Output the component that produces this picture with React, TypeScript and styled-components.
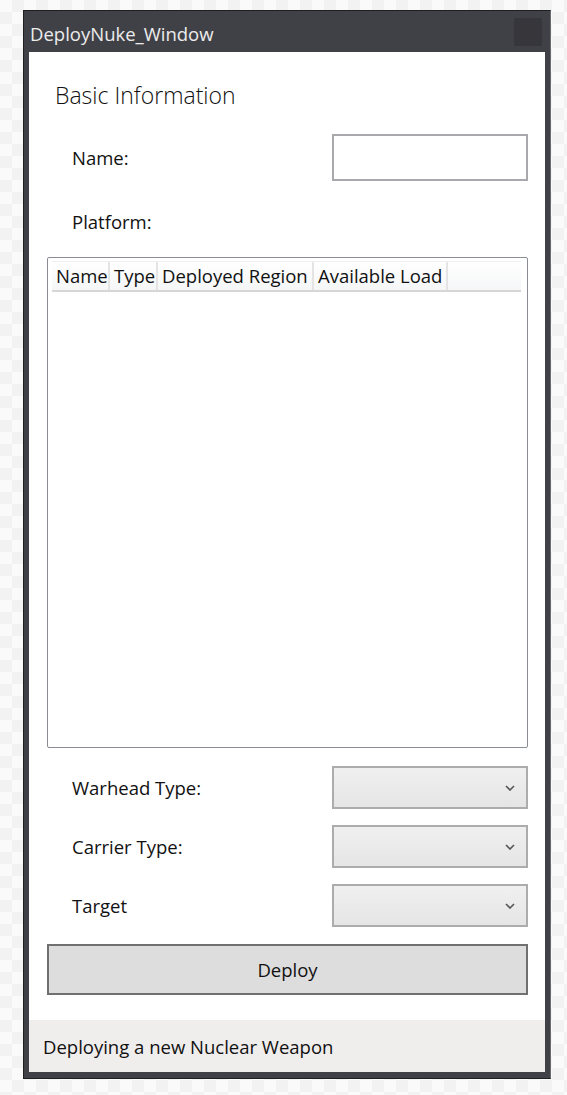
import React from 'react'
import styled, { createGlobalStyle } from 'styled-components'

const GlobalStyle = createGlobalStyle`
  html, body {
    margin: 0;
    padding: 0;
  }

  body {
    font-family: "Open Sans", "Noto Sans", sans-serif;
    background-color: #fafafa;
    background-image: repeating-conic-gradient(#f2f2f2 0 25%, #fafafa 0 50%);
    background-size: 24px 24px;
    min-height: 1095px;
  }
`

const Page = styled.div`
  padding: 10px 0 0 23px;
`

const Window = styled.div`
  width: 528px;
  box-sizing: border-box;
  border: 1px solid #1f1f22;
  border-right-color: #6a6b70;
  background: #404147;
  padding: 0 5px 6px 5px;
  display: flex;
  flex-direction: column;
`

const TitleBar = styled.div`
  height: 41px;
  display: flex;
  align-items: center;
  justify-content: space-between;
  padding: 0 3px 0 1px;
`

const Title = styled.span`
  color: #ececec;
  font-size: 18.5px;
  padding-top: 4px;
`

const CloseBox = styled.div`
  width: 28px;
  height: 28px;
  margin-top: 1px;
  background: #36363b;
`

const Content = styled.div`
  background: #ffffff;
  padding: 27px 17px 25px 18px;
  display: flex;
  flex-direction: column;
`

const Heading = styled.h1`
  margin: 0 0 0 8px;
  height: 34px;
  line-height: 32px;
  font-size: 23px;
  font-weight: 300;
  color: #111;
`

const Row = styled.div<{ $height: number; $top: number }>`
  display: flex;
  align-items: center;
  justify-content: space-between;
  height: ${p => p.$height}px;
  margin-top: ${p => p.$top}px;
`

const Label = styled.span`
  padding-left: 25px;
  font-size: 18.5px;
  color: #111;
`

const TextBox = styled.div`
  width: 196px;
  height: 100%;
  box-sizing: border-box;
  border: 2px solid #a9a9ad;
  background: #fff;
`

const ListView = styled.div`
  margin-top: 16px;
  height: 491px;
  box-sizing: border-box;
  border: 1px solid #8a8d94;
  border-radius: 2px;
  padding: 3px 6px 0 4px;
`

const HeaderRow = styled.div`
  display: flex;
  height: 31px;
  border-top: 1px solid #f0f0f0;
  border-bottom: 2px solid #d6d6d6;
  background: linear-gradient(#ffffff, #f5f6f7);
  box-sizing: border-box;
`

const HeaderCell = styled.div<{ $width?: number }>`
  ${p => (p.$width ? `width: ${p.$width}px;` : 'flex: 1;')}
  box-sizing: border-box;
  padding-left: 4px;
  border-right: ${p => (p.$width ? '2px solid #e4e4e4' : 'none')};
  font-size: 18.5px;
  line-height: 28px;
  color: #111;
  white-space: nowrap;
  overflow: hidden;
`

const ComboBox = styled.div`
  width: 196px;
  height: 100%;
  box-sizing: border-box;
  border: 2px solid #acacac;
  background: linear-gradient(#f0f0f0, #e5e5e5);
  display: flex;
  align-items: center;
  justify-content: flex-end;
  padding-right: 11px;
`

const Chevron = () => (
  <svg width="10" height="6" viewBox="0 0 10 6">
    <polyline points="1,1 5,5 9,1" fill="none" stroke="#555" strokeWidth="1.6" />
  </svg>
)

const DeployButton = styled.button`
  margin-top: 17px;
  height: 51px;
  width: 100%;
  border: 2px solid #707070;
  background: #dddddd;
  font-family: inherit;
  font-size: 18.5px;
  color: #111;
  padding: 0;
`

const StatusBar = styled.div`
  height: 52px;
  background: #f0eded;
  display: flex;
  align-items: center;
  padding-left: 14px;
  font-size: 18.5px;
  color: #111;
`

const combos = [
  { label: 'Warhead Type:', top: 18 },
  { label: 'Carrier Type:', top: 16 },
  { label: 'Target', top: 16 },
]

const columns = [
  { title: 'Name', width: 58 },
  { title: 'Type', width: 48 },
  { title: 'Deployed Region', width: 156 },
  { title: 'Available Load', width: 134 },
]

export default function App() {
  return (
    <>
      <GlobalStyle />
      <Page>
        <Window>
          <TitleBar>
            <Title>DeployNuke_Window</Title>
            <CloseBox />
          </TitleBar>
          <Content>
            <Heading>Basic Information</Heading>
            <Row $height={47} $top={21}>
              <Label>Name:</Label>
              <TextBox />
            </Row>
            <Row $height={40} $top={20}>
              <Label>Platform:</Label>
            </Row>
            <ListView>
              <HeaderRow>
                {columns.map(c => (
                  <HeaderCell key={c.title} $width={c.width}>{c.title}</HeaderCell>
                ))}
                <HeaderCell />
              </HeaderRow>
            </ListView>
            {combos.map(c => (
              <Row key={c.label} $height={43} $top={c.top}>
                <Label>{c.label}</Label>
                <ComboBox>
                  <Chevron />
                </ComboBox>
              </Row>
            ))}
            <DeployButton>Deploy</DeployButton>
          </Content>
          <StatusBar>Deploying a new Nuclear Weapon</StatusBar>
        </Window>
      </Page>
    </>
  )
}
